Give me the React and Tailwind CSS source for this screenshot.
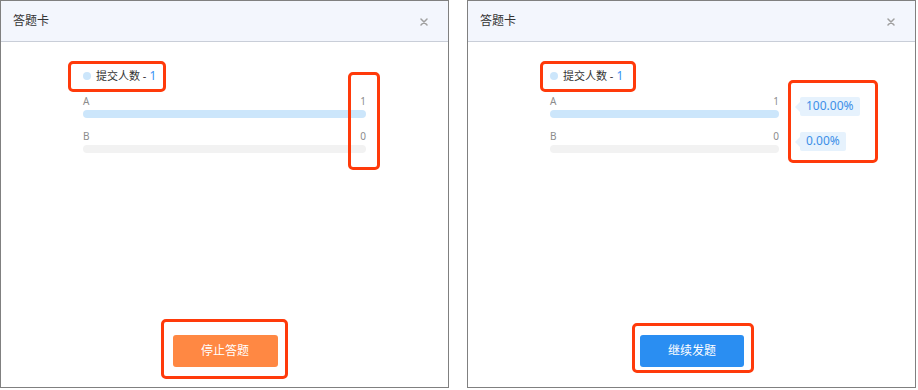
const font = { fontFamily: '"Noto Sans", "Noto Sans CJK SC", sans-serif' };

const options = [
  { label: "A", count: 1, pct: "100.00%", fill: "bg-[#cce6fb]" },
  { label: "B", count: 0, pct: "0.00%", fill: "bg-[#f2f2f2]" },
];

function Mark({ className }) {
  return (
    <div
      className={
        "absolute pointer-events-none rounded-[5px] border-[3px] border-[#ff3a0a] " + className
      }
    />
  );
}

function Card({ showPct, button }) {
  return (
    <div className="relative w-[449px] h-[388px] border border-[#808080] bg-white flex flex-col">
      {/* header */}
      <div className="h-[41px] shrink-0 flex items-center justify-between pl-[12px] pr-[20px] bg-[#f3f6fd] border-b border-[#c9ced8]">
        <span className="text-[12px] text-[#333]">答题卡</span>
        <svg width="8" height="8" viewBox="0 0 8 8" className="mt-[1px]">
          <path d="M1 1L7 7M7 1L1 7" stroke="#a0a0a0" strokeWidth="1.5" strokeLinecap="round" />
        </svg>
      </div>

      {/* body */}
      <div className="flex-1 pl-[82px] pt-[26px]">
        <div className="flex items-center h-[16px] text-[11px] text-[#333]">
          <span className="w-[8px] h-[8px] rounded-full bg-[#cce6fb] mr-[5px]" />
          <span>提交人数 - </span>
          <span className="ml-[3px] text-[12px] text-[#3b95f5]">1</span>
        </div>

        <div className="mt-[10px] flex flex-col gap-[11px]">
          {options.map((o) => (
            <div key={o.label} className="flex items-center">
              <div className={showPct ? "w-[229px]" : "w-[283px]"}>
                <div className="flex justify-between h-[14px] items-center text-[10px] text-[#8c8c8c]">
                  <span>{o.label}</span>
                  <span>{o.count}</span>
                </div>
                <div className={"mt-[2px] h-[8px] rounded-full " + o.fill} />
              </div>
              {showPct && (
                <div className="relative ml-[21px] h-[19px] px-[6px] flex items-center rounded-[2px] bg-[#e6f2fd] text-[12px] text-[#3d8fe8]">
                  <span className="absolute -left-[5px] top-[5px] w-0 h-0 border-y-[5px] border-y-transparent border-r-[5px] border-r-[#e6f2fd]" />
                  {o.pct}
                </div>
              )}
            </div>
          ))}
        </div>
      </div>

      {/* footer */}
      <div className="flex justify-center pb-[20px]">{button}</div>
    </div>
  );
}

export default function App() {
  return (
    <div className="w-[918px] h-[390px] bg-white flex gap-[18px]" style={font}>
      <div className="relative">
        <Card
          button={
            <button className="ml-[1px] w-[105px] h-[32px] rounded-[3px] bg-[#ff8843] text-white text-[12px]">
              停止答题
            </button>
          }
        />
        <Mark className="left-[68px] top-[61px] w-[98px] h-[31px]" />
        <Mark className="left-[348px] top-[72px] w-[32px] h-[98px]" />
        <Mark className="left-[161px] top-[319px] w-[127px] h-[60px]" />
      </div>
      <div className="relative">
        <Card
          showPct
          button={
            <button className="ml-[1px] w-[104px] h-[32px] rounded-[3px] bg-[#2a8ef2] text-white text-[12px]">
              继续发题
            </button>
          }
        />
        <Mark className="left-[73px] top-[61px] w-[96px] h-[31px]" />
        <Mark className="left-[321px] top-[80px] w-[90px] h-[83px]" />
        <Mark className="left-[165px] top-[323px] w-[122px] h-[50px]" />
      </div>
    </div>
  );
}
